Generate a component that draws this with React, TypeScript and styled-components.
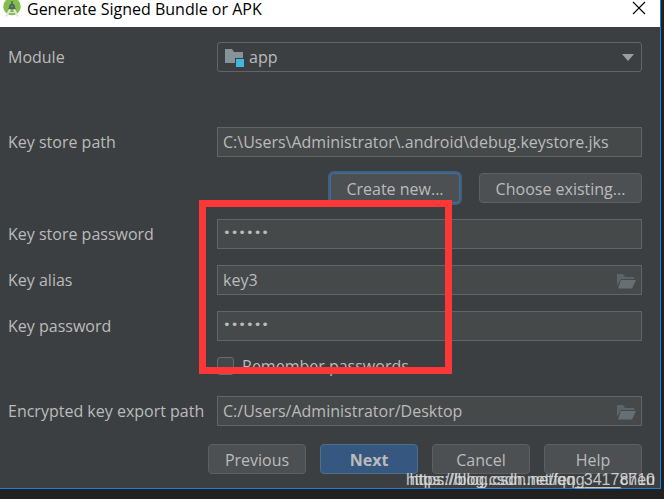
import React from 'react';
import styled, { createGlobalStyle } from 'styled-components';

const GlobalStyle = createGlobalStyle`
  * { box-sizing: border-box; }
  html, body, #root { height: 100%; }
  body {
    margin: 0;
    background: #212121;
    overflow: hidden;
    font-family: "Open Sans", "Noto Sans", sans-serif;
  }
  button, input, select { font: inherit; color: inherit; }
`;

const Desktop = styled.div`
  position: relative;
  min-height: 100%;
  padding: 0 3px 10px 0;
`;

const Dialog = styled.main`
  background: #3c3f41;
  border: solid #1e7fd3;
  border-width: 0 1px 1px 0;
  color: #bbbbbb;
  font-size: 16px;
  line-height: 22px;
`;

const TitleBar = styled.header`
  display: flex;
  align-items: flex-start;
  gap: 5px;
  height: 27px;
  padding: 0 14px 0 3px;
  background: #fff;
  color: #000;
`;

const Title = styled.h1`
  flex: 1;
  margin: 0;
  font-size: 16px;
  font-weight: 400;
  line-height: 18px;
`;

const CloseButton = styled.button`
  display: flex;
  margin-top: 1px;
  padding: 0;
  border: 0;
  background: none;
`;

const Form = styled.form`
  display: flex;
  flex-direction: column;
  padding: 15px 18px 14px 8px;
`;

const Row = styled.div<{ $gap?: number }>`
  display: grid;
  grid-template-columns: 209px 1fr;
  align-items: center;
  margin-bottom: ${({ $gap }) => $gap ?? 16}px;
`;

const Control = styled.div`
  position: relative;
  display: flex;
`;

const TextInput = styled.input`
  flex: 1;
  min-width: 0;
  height: 30px;
  padding: 0 32px 0 5px;
  border: 1px solid #646464;
  background: #45494a;
  outline: 0;

  &[type='password'] {
    padding-bottom: 4px;
    font-family: "DejaVu Sans", sans-serif;
    font-size: 13px;
  }
`;

const Select = styled.select`
  flex: 1;
  height: 30px;
  padding: 0 32px 0 31px;
  border: 1px solid #646464;
  border-radius: 3px;
  background: #3c3f41;
  appearance: none;
`;

const ModuleIcon = styled.svg`
  position: absolute;
  left: 8px;
  top: 7px;
`;

const ArrowIcon = styled.svg`
  position: absolute;
  right: 8px;
  top: 12px;
`;

const BrowseButton = styled.button`
  position: absolute;
  right: 6px;
  top: 9px;
  display: flex;
  padding: 0;
  border: 0;
  background: none;
`;

const KeyStoreActions = styled.div`
  display: flex;
  justify-content: flex-end;
  gap: 19px;
  margin-bottom: 16px;
`;

const Button = styled.button<{ $primary?: boolean; $ring?: boolean; $width?: number }>`
  width: ${({ $width }) => $width ?? 98}px;
  height: 30px;
  padding: 2px 0 0;
  border: 1px solid ${({ $primary, $ring }) => ($primary ? '#4c708c' : $ring ? '#466d94' : '#5e6060')};
  border-radius: 4px;
  background: ${({ $primary }) => ($primary ? '#365880' : '#4c5052')};
  box-shadow: ${({ $ring }) => ($ring ? '0 0 0 2px #3d6185' : 'none')};
  font-weight: ${({ $primary }) => ($primary ? 700 : 400)};
  line-height: 26px;
`;

const RememberLabel = styled.label`
  display: flex;
  align-items: center;
  gap: 8px;
  height: 22px;
  margin: -2px 0 19px 209px;
`;

const Checkbox = styled.input`
  appearance: none;
  width: 17px;
  height: 18px;
  margin: 0;
  border: 1px solid #6b6b6b;
  border-radius: 3px;
  background: #43494a;
`;

const Footer = styled.footer`
  display: flex;
  justify-content: flex-end;
  gap: 14px;
`;

const Highlight = styled.div`
  position: absolute;
  left: 199px;
  top: 200px;
  width: 253px;
  height: 174px;
  border: 7px solid #fc3737;
  pointer-events: none;
`;

const Watermark = styled.div`
  position: absolute;
  right: 9px;
  bottom: 9px;
  display: grid;
  justify-items: end;
  color: rgba(225, 225, 225, 0.85);
  font: 16px/20px "Liberation Sans", Arial, sans-serif;
  white-space: nowrap;
  pointer-events: none;

  & > span { grid-area: 1 / 1; }
`;

const StudioLogo = () => (
  <svg width="19" height="18" viewBox="0 0 19 18" aria-hidden="true">
    <circle cx="9" cy="6.500" r="8.700" fill="#83bd4b" />
    <path d="M7 9.500 3 16.500M11 9.500l4 7" stroke="#e3e6e1" strokeWidth="2" />
    <path d="M6 12q3 1.500 6 0" stroke="#e3e6e1" strokeWidth="1.200" fill="none" />
    <path d="M8 1h2v3H8z" fill="#5f7f58" />
    <path d="M9 2.500 13 9H5z" fill="#54705a" />
    <circle cx="9" cy="6.500" r="2.800" fill="#4c655b" />
    <circle cx="9" cy="6.500" r="0.800" fill="#8fae88" />
  </svg>
);

const FolderIcon = () => (
  <svg width="19" height="15" viewBox="0 0 19 15" aria-hidden="true">
    <path d="M0 0h6l2 3h9v2H4L0 12z" fill="#5c6468" />
    <path d="M4 6h15l-4 8.500H1z" fill="#667074" />
  </svg>
);

const Browse = ({ label }: { label: string }) => (
  <BrowseButton type="button" aria-label={label}>
    <FolderIcon />
  </BrowseButton>
);

interface FieldProps {
  id: string;
  label: string;
  value: string;
  type?: string;
  gap?: number;
  browse?: boolean;
}

const Field = ({ id, label, value, type = 'text', gap, browse }: FieldProps) => (
  <Row $gap={gap}>
    <label htmlFor={id}>{label}</label>
    <Control>
      <TextInput id={id} type={type} defaultValue={value} spellCheck={false} />
      {browse && <Browse label={`Browse ${label}`} />}
    </Control>
  </Row>
);

export default function App() {
  return (
    <>
      <GlobalStyle />
      <Desktop>
        <Dialog>
          <TitleBar>
            <StudioLogo />
            <Title>Generate Signed Bundle or APK</Title>
            <CloseButton type="button" aria-label="Close">
              <svg width="14" height="14" viewBox="0 0 14 14" aria-hidden="true">
                <path d="M1 1l12 12M13 1L1 13" stroke="#000" strokeWidth="1.100" />
              </svg>
            </CloseButton>
          </TitleBar>
          <Form onSubmit={(e) => e.preventDefault()}>
            <Row $gap={55}>
              <label htmlFor="module">Module</label>
              <Control>
                <Select id="module" defaultValue="app">
                  <option value="app">app</option>
                </Select>
                <ModuleIcon width="19" height="18" viewBox="0 0 19 18" aria-hidden="true">
                  <path d="M0 0h7l2 3h9v6h-8v5H0z" fill="#87939a" />
                  <path d="M11 10h8v8h-8z" fill="#40b6e0" />
                </ModuleIcon>
                <ArrowIcon width="12" height="7" viewBox="0 0 12 7" aria-hidden="true">
                  <path d="M0 0h12L6 7z" fill="#9b9e9f" />
                </ArrowIcon>
              </Control>
            </Row>
            <Field id="store" label="Key store path" value="C:\Users\Administrator\.android\debug.keystore.jks" />
            <KeyStoreActions>
              <Button type="button" $ring $width={130}>Create new...</Button>
              <Button type="button" $width={163}>Choose existing...</Button>
            </KeyStoreActions>
            <Field id="storepw" label="Key store password" type="password" value="secret" />
            <Field id="alias" label="Key alias" value="key3" browse />
            <Field id="keypw" label="Key password" type="password" value="secret" />
            <RememberLabel>
              <Checkbox type="checkbox" />
              Remember passwords
            </RememberLabel>
            <Field id="export" label="Encrypted key export path" value="C:/Users/Administrator/Desktop" gap={18} browse />
            <Footer>
              <Button type="button">Previous</Button>
              <Button type="submit" $primary>Next</Button>
              <Button type="button">Cancel</Button>
              <Button type="button">Help</Button>
            </Footer>
          </Form>
        </Dialog>
        <Highlight />
        <Watermark>
          <span>https://blog.csdn.net/qq_34178710</span>
          <span>https://blog.csdn.net/feng____chen</span>
        </Watermark>
      </Desktop>
    </>
  );
}
